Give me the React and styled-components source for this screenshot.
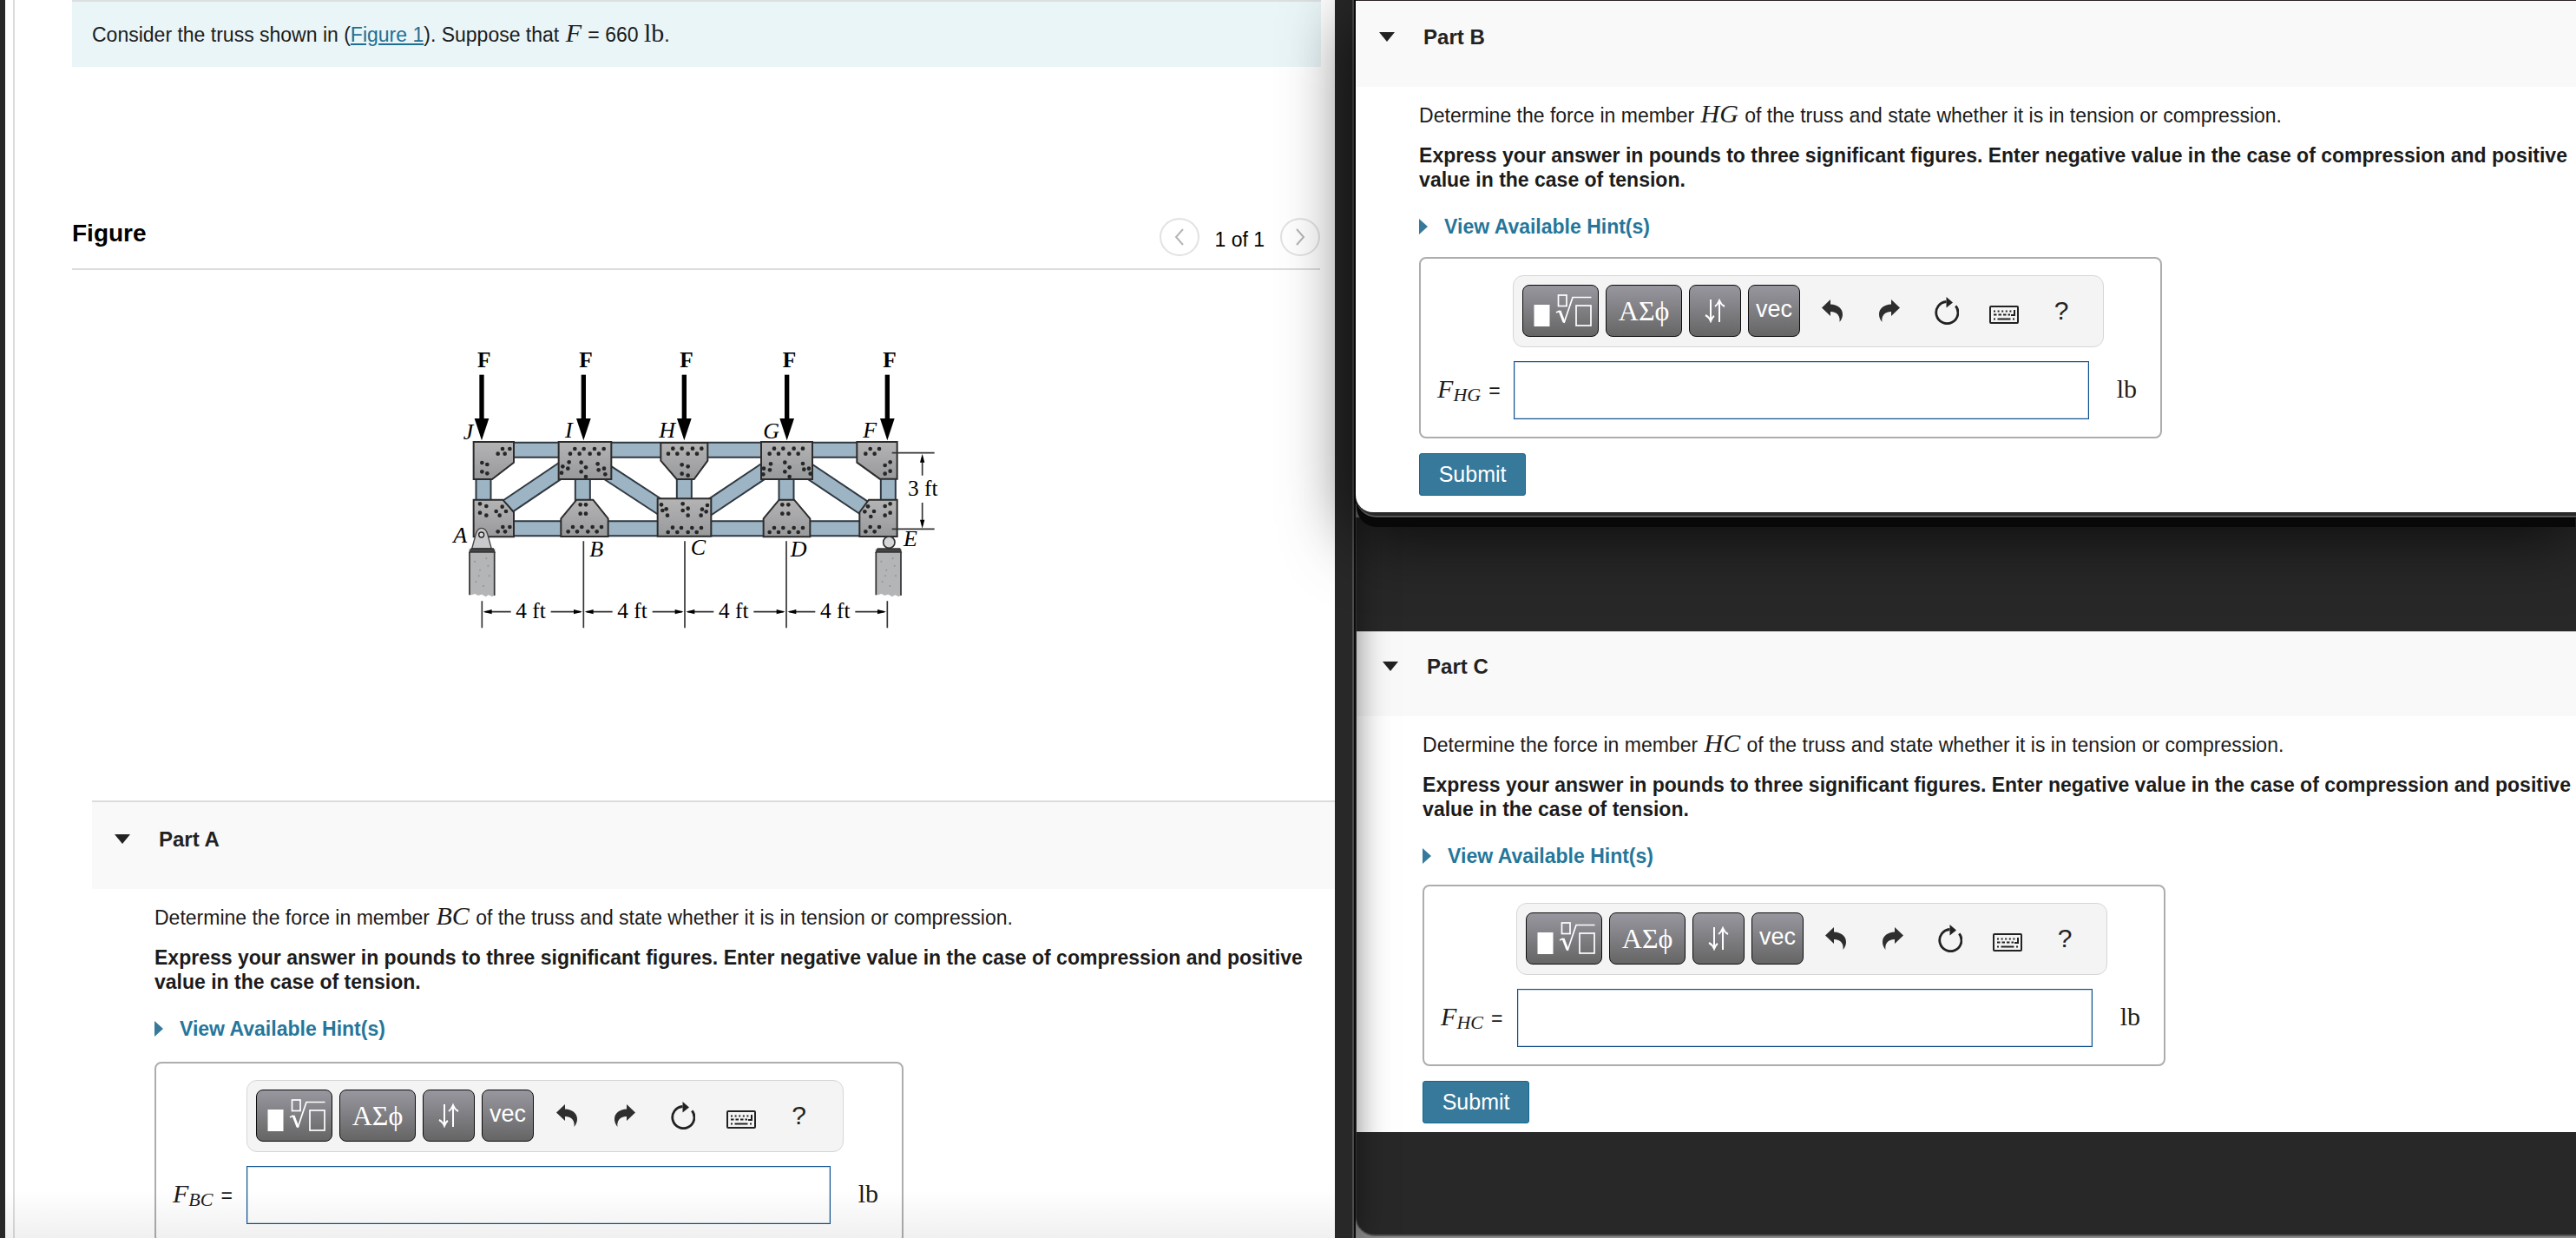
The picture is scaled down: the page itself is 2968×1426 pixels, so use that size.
import React, { useState } from "react";
import styled, { createGlobalStyle } from "styled-components";

const GlobalStyle = createGlobalStyle`
  * {
    box-sizing: border-box;
  }

  body {
    margin: 0;
    background: #8c8c8c;
    color: #1b1b1b;
    font-family: "Liberation Sans", Arial, sans-serif;
    font-size: 23px;
    line-height: 28px;
  }

  h2, p {
    margin: 0;
  }
`;

const Desktop = styled.div`
  display: grid;
  grid-template-columns: minmax(0, 10fr) minmax(0, 9fr);
  height: 100vh;
  overflow: hidden;
`;

const LeftWindow = styled.main`
  position: relative;
  z-index: 2;
  min-width: 0;
  overflow: hidden;
  padding-left: 6px;
  padding-right: 20px;
  border-right: 2px solid #4c4c4c;
  background: #282828;
`;

const LeftShell = styled.div`
  position: relative;
  z-index: 2;
  display: grid;
  min-height: 0;
  padding-right: 2px;
  background: #0c0c0c;
  box-shadow: 0 0 36px rgba(0, 0, 0, 0.5);
`;

const LeftPage = styled.div`
  position: relative;
  height: 100%;
  overflow: hidden;
  padding-left: 9px;
  background: #fff;

  &::after {
    content: "";
    position: absolute;
    left: 0;
    right: 0;
    bottom: 0;
    height: 56px;
    background: linear-gradient(rgba(0, 0, 0, 0), rgba(0, 0, 0, 0.06));
    pointer-events: none;
  }
`;

const LeftContent = styled.div`
  min-height: 100%;
  padding-left: 66px;
  border-left: 2px solid #dcdcdc;
`;

const Prompt = styled.p`
  margin-right: 16px;
  padding: 24px 24px 23px 23px;
  border-top: 2px solid #dcdfdf;
  background: #e9f5f7;
`;

const FigureLink = styled.a`
  color: #1f6f94;
  text-decoration: underline;
`;

const MathText = styled.span`
  margin: 0 ${(props) => props.$gap || 0}px;
  font-family: "Liberation Serif", "Times New Roman", serif;
  font-size: 30px;
  font-style: ${(props) => (props.$roman ? "normal" : "italic")};
  line-height: 1px;
`;

const FigureHead = styled.div`
  display: flex;
  justify-content: space-between;
  margin: 174px 17px 0 0;
  padding-bottom: 14px;
  border-bottom: 2px solid #dcdcdc;
`;

const FigureTitle = styled.h2`
  font-size: 28px;
  line-height: 36px;
  color: #000;
`;

const Pager = styled.div`
  display: flex;
  align-items: center;
  gap: 18px;
  color: #000;
`;

const PageCount = styled.span`
  padding-top: 6px;
`;

const PageButton = styled.button`
  display: grid;
  place-items: center;
  width: 46px;
  height: 44px;
  padding: 0;
  border: 2px solid #e2e2e2;
  border-radius: 50%;
  background: transparent;
`;

const FigureArea = styled.figure`
  display: flex;
  justify-content: center;
  margin: 69px 18px 0 0;
`;

const RightColumn = styled.div`
  display: flex;
  flex-direction: column;
  min-width: 0;
  padding-bottom: 2px;
`;

const FrontWindow = styled.section`
  position: relative;
  z-index: 3;
  padding-bottom: 4px;
  border-top: 1px solid #2a2226;
  border-bottom: 2px solid #555;
  border-bottom-left-radius: 24px;
  background: #282828;
  box-shadow: 0 0 0 1px #000, 0 12px 0 -1px #080808, 0 20px 80px rgba(0, 0, 0, 0.75);
`;

const FrontPage = styled.div`
  overflow: hidden;
  padding: 0 0 19px 1px;
  border-bottom-left-radius: 20px;
  background: #fff;
`;

const BackWindow = styled.section`
  flex: 1;
  padding: 131px 0 0;
  border-bottom: 2px solid #555;
  border-left: 1px solid #444;
  border-bottom-left-radius: 22px;
  background: #282828;
`;

const BackPage = styled.div`
  padding: 0 0 10px 4px;
  border-top: 1px solid #c4c4c4;
  background: linear-gradient(90deg, #f9f9f9 4px, transparent 4px) 0 0 / 100% 97px no-repeat, #fff;
`;

const SectionA = styled.div`
  margin: 192px 0 0 23px;
  border-top: 2px solid #dcdcdc;
`;

const PartHeader = styled.header`
  display: flex;
  align-items: flex-start;
  gap: 33px;
  padding: ${(props) => props.$top}px 24px 43px 26px;
  background: #f9f9f9;
`;

const Toggle = styled.button`
  display: flex;
  padding: 8px 0 0;
  border: 0;
  background: none;
`;

const PartTitle = styled.h2`
  font-size: 24px;
  line-height: 28px;
  color: #222;
`;

const PartBody = styled.div`
  padding: 19px 0 0 72px;
`;

const Instruction = styled.p`
  margin-top: 18px;
  font-weight: 700;
`;

const HintButton = styled.button`
  display: flex;
  align-items: center;
  gap: 19px;
  margin: 26px 0 ${(props) => props.$below}px;
  padding: 0;
  border: 0;
  background: none;
  color: #25769a;
  font: inherit;
  font-weight: 700;
`;

const AnswerBox = styled.form`
  max-width: ${(props) => (props.$wide ? 863 : 856)}px;
  padding: 19px 27px 20px 19px;
  border: 2px solid #adadad;
  border-radius: 8px;
`;

const Toolbar = styled.div`
  display: flex;
  align-items: center;
  gap: 8px;
  width: ${(props) => (props.$wide ? 688 : 681)}px;
  height: 83px;
  margin-left: ${(props) => (props.$wide ? 85 : 87)}px;
  padding: 0 0 1px 10px;
  border: 1px solid #d6d6d6;
  border-radius: 12px;
  background: #f4f4f4;
`;

const ToolButton = styled.button`
  display: grid;
  place-items: center;
  width: ${(props) => props.$width}px;
  height: 60px;
  padding: 0 0 ${(props) => props.$lift || 0}px;
  border: 1px solid #0c0c0c;
  border-radius: 8px;
  background: linear-gradient(#98979f, #656565);
  color: #fff;
  font-family: ${(props) => (props.$serif ? '"Liberation Serif", serif' : '"Liberation Sans", sans-serif')};
  font-size: ${(props) => (props.$serif ? 32 : 27)}px;
  line-height: 32px;
`;

const IconGroup = styled.div`
  display: flex;
  align-items: center;
  margin-left: -4px;
`;

const IconButton = styled.button`
  display: grid;
  place-items: center;
  width: ${(props) => (props.$wide ? 67 : 66)}px;
  height: 60px;
  padding: 0;
  border: 0;
  background: none;
  color: #222;
  font-family: "Liberation Sans", sans-serif;
  font-size: 30px;
`;

const AnswerRow = styled.div`
  display: flex;
  align-items: center;
  margin-top: 16px;
`;

const AnswerLabel = styled.label`
  flex: none;
  width: ${(props) => (props.$wide ? 85 : 88)}px;
  white-space: nowrap;
`;

const Subscript = styled.span`
  position: relative;
  top: 4px;
  font-size: 22px;
`;

const Equals = styled.span`
  margin-left: 9px;
`;

const AnswerInput = styled.input`
  flex: 1;
  min-width: 0;
  height: 67px;
  padding: 0 12px;
  border: 1px solid #0d4f8f;
  border-radius: 0;
  background: transparent;
  box-shadow: inset 0 0 0 1px #c9d9e6;
  font: inherit;
`;

const Unit = styled.span`
  margin-left: 32px;
`;

const SubmitButton = styled.button`
  width: 123px;
  height: 49px;
  margin-top: 17px;
  padding: 0;
  border: 1px solid #0f6a90;
  border-radius: 3px;
  background: #36799b;
  color: #fff;
  font-family: inherit;
  font-size: 25px;
`;

const RootIcon = () => (
  <svg width="86" height="58" viewBox="1 1 86 58" fill="none" stroke="#fff" strokeWidth="1.7">
    <rect x="13.5" y="23" width="18" height="25" fill="#fff" stroke="none" />
    <rect x="41.5" y="12" width="9.5" height="12.5" />
    <path d="M39 32l4-2" />
    <path d="M43 30l5 13" strokeWidth="3" />
    <path d="M48 44L58 14.5H79.5" />
    <rect x="62" y="24" width="17" height="23" />
  </svg>
);

const ArrowsIcon = () => (
  <svg width="26" height="28" viewBox="0 0 26 28" fill="none" stroke="#fff" strokeWidth="2">
    <path d="M8 1V26M2 19Q6 21 8 26Q10 21 12 20M18 27V2M24 9Q20 7 18 2Q16 7 13 9" />
  </svg>
);

const UndoIcon = () => (
  <svg width="24" height="26" viewBox="0 0 24 26" fill="#2e2e2e">
    <path d="M0 9.5L10 0V5.500C18 6 24 10 24 17C24 20 23 23 20.500 26C21.500 19 18 14 10 14V19Z" />
  </svg>
);

const RedoIcon = () => (
  <svg width="24" height="26" viewBox="0 0 24 26" fill="#2e2e2e">
    <path d="M24 9.5L14 0V5.500C6 6 0 10 0 17C0 20 1 23 3.500 26C2.500 19 6 14 14 14V19Z" />
  </svg>
);

const ResetIcon = () => (
  <svg width="28" height="32" viewBox="0 0 28 32">
    <path d="M24.300 10.300A12.600 12.600 0 1 1 13.500 5.500" fill="none" stroke="#222" strokeWidth="2.800" />
    <path d="M13.500 0L21 6.500L13.500 12.500Z" fill="#222" />
  </svg>
);

const KeyboardIcon = () => (
  <svg width="34" height="30" viewBox="0 0 34 30" fill="none" stroke="#222" strokeWidth="2">
    <rect x="1" y="10" width="32" height="19" rx="1" />
    <path d="M5 15.500H26" strokeDasharray="2 2.600" />
    <path d="M5 19.500H24" strokeDasharray="3.500 2" />
    <path d="M29 14V20H25M5 24.500H7M9.500 24.500H24.500M27 24.500H29" />
  </svg>
);

const CHORDS = [
  [120, 415, 1560, 415],
  [120, 686, 1540, 686],
  [138, 480, 138, 620],
  [481, 480, 481, 620],
  [832, 480, 832, 620],
  [1185, 480, 1185, 620],
  [1537, 480, 1537, 620],
  [190, 631, 430, 469],
  [550, 482, 770, 626],
  [900, 626, 1130, 472],
  [1240, 472, 1470, 626],
];

const PLATES = [
  "104,387 243,387 243,458 168,516 104,516",
  "398,387 580,387 580,516 398,516",
  "751,390 913,390 913,452 866,516 806,516 751,452",
  "1098,387 1275,387 1275,516 1098,516",
  "1429,387 1568,387 1568,515 1508,515 1429,458",
  "104,587 205,587 243,630 243,715 104,715",
  "460,587 517,587 569,652 569,714 406,714 406,652",
  "740,583 925,583 925,713 740,713",
  "1160,587 1212,587 1267,652 1267,715 1106,715 1106,652",
  "1470,587 1568,587 1568,714 1438,714 1438,630",
];

const BOLTS = [
  // J, A
  [204, 411], [229, 411], [188, 428], [212, 428], [133, 459], [151, 465], [133, 490], [151, 496],
  [126, 601], [148, 609], [126, 632], [148, 641], [182, 627], [194, 641], [203, 611], [216, 627],
  [205, 681], [229, 681], [188, 697], [213, 697],
  // I, B
  [454, 411], [485, 411], [522, 411], [554, 411], [438, 428], [470, 428], [506, 428], [537, 428],
  [434, 457], [412, 472], [430, 479], [408, 494], [476, 458], [492, 475], [476, 490], [492, 507],
  [533, 463], [536, 484], [555, 479], [559, 499],
  [473, 604], [492, 604], [473, 635], [492, 635], [447, 681], [478, 681], [515, 681], [546, 681],
  [431, 697], [462, 697], [499, 697], [530, 697],
  // H, C
  [793, 410], [824, 410], [861, 410], [892, 410], [777, 428], [808, 428], [845, 428], [876, 428],
  [824, 466], [845, 472], [824, 497], [845, 503],
  [753, 604], [757, 624], [770, 619], [774, 641], [827, 601], [845, 617], [827, 624], [845, 641],
  [912, 606], [894, 620], [908, 628], [890, 641], [792, 683], [822, 684], [859, 684], [891, 684],
  [776, 699], [808, 699], [845, 699], [875, 699],
  // G, D
  [1143, 410], [1174, 410], [1211, 410], [1242, 410], [1127, 428], [1158, 428], [1195, 428], [1226, 428],
  [1131, 463], [1107, 479], [1128, 484], [1105, 499], [1180, 458], [1196, 475], [1180, 490], [1196, 507],
  [1242, 462], [1246, 482], [1263, 479], [1268, 497],
  [1171, 604], [1192, 604], [1171, 635], [1192, 635], [1143, 684], [1174, 684], [1211, 684], [1242, 684],
  [1127, 699], [1158, 699], [1195, 699], [1226, 699],
  // F, E
  [1475, 411], [1506, 411], [1459, 428], [1490, 428], [1544, 457], [1526, 468], [1544, 488], [1526, 497],
  [1544, 601], [1526, 609], [1544, 632], [1526, 641], [1467, 610], [1456, 628], [1488, 627], [1477, 645],
  [1475, 681], [1506, 681], [1459, 697], [1490, 697],
];

const JOINTS = [
  ["J", 68, 378], ["I", 420, 373], ["H", 745, 373], ["G", 1105, 376], ["F", 1450, 373],
  ["A", 34, 735], ["B", 505, 783], ["C", 854, 776], ["D", 1199, 782], ["E", 1590, 747],
];

const LOADS = [132, 484, 832, 1187, 1534];
const STATIONS = [133, 484, 834, 1185, 1534];

const Pier = ({ x }) => (
  <g>
    <path
      d={`M${x} 756H${x + 90}V916l-10 6-12-6-10 6-14-8-12 4-12-6-10 4H${x}Z`}
      fill="#b4b5b7"
    />
    <path d={`M${x + 2} 916V768M${x + 88} 918V768`} stroke="#333" strokeWidth="5" />
    <path d={`M${x + 2} 768L${x + 8} 756H${x + 84}L${x + 89} 768Z`} fill="#444" stroke="#333" strokeWidth="4" />
    {[[20, 800], [60, 790], [38, 830], [70, 850], [24, 870], [50, 885], [66, 815], [34, 850]].map(([dx, y]) => (
      <circle key={`${dx}-${y}`} cx={x + dx} cy={y} r="3" fill="#929395" />
    ))}
  </g>
);

const Truss = () => (
  <svg width="582" height="350" viewBox="0 0 1746 1050" role="img" aria-label="Truss with five loads F">
    <defs>
      <linearGradient id="steel" x1="0" y1="0" x2="0" y2="1">
        <stop offset="0" stopColor="#b4b4b5" />
        <stop offset="1" stopColor="#98999b" />
      </linearGradient>
    </defs>
    {CHORDS.map(([x1, y1, x2, y2]) => (
      <g key={`${x1}-${y1}-${x2}`}>
        <line x1={x1} y1={y1} x2={x2} y2={y2} stroke="#2f3840" strokeWidth="57" />
        <line x1={x1} y1={y1} x2={x2} y2={y2} stroke="#9db4c5" strokeWidth="45" />
      </g>
    ))}
    {PLATES.map((points) => (
      <polygon key={points} points={points} fill="url(#steel)" stroke="#2c2c2c" strokeWidth="6" />
    ))}
    {BOLTS.map(([x, y]) => (
      <circle key={`${x}-${y}`} cx={x} cy={y} r="7" fill="#262626" />
    ))}
    {LOADS.map((x) => (
      <g key={x}>
        <rect x={x - 8} y="155" width="16" height="155" />
        <path d={`M${x - 25} 306H${x + 25}L${x} 382Z`} />
        <text x={x - 15} y="130" fontFamily="Liberation Serif" fontWeight="700" fontSize="76">F</text>
      </g>
    ))}
    <path d="M98 756L112 705Q118 685 131 685Q146 685 152 705L166 756Z" fill="#c9cacc" stroke="#444" strokeWidth="4" />
    <circle cx="131" cy="708" r="9" fill="#ddd" stroke="#222" strokeWidth="4" />
    <circle cx="1540" cy="734" r="20" fill="#d5d6d8" stroke="#333" strokeWidth="5" />
    <Pier x={88} />
    <Pier x={1493} />
    <g stroke="#333" strokeWidth="5">
      <path d="M133 937V1030M484 730V1030M834 730V1030M1185 730V1030M1534 937V1030" />
      <path d="M1550 425H1697M1550 688H1697M1655 440V503M1655 597V675" />
    </g>
    <path d="M1655 428l-8 30h16ZM1655 686l-8-30h16Z" />
    {STATIONS.slice(0, 4).map((x, index) => {
      const end = STATIONS[index + 1];
      return (
        <g key={x}>
          <path d={`M${x + 10} 974H${x + 100}M${x + 238} 974H${end - 10}`} stroke="#333" strokeWidth="5" />
          <path d={`M${x + 4} 974l30-8v16ZM${end - 4} 974l-30-8v16Z`} />
          <text x={x + 117} y="997" fontFamily="Liberation Serif" fontSize="76">4 ft</text>
        </g>
      );
    })}
    <text x="1605" y="574" fontFamily="Liberation Serif" fontSize="76">3 ft</text>
    {JOINTS.map(([name, x, y]) => (
      <text key={name} x={x} y={y} fontFamily="Liberation Serif" fontStyle="italic" fontSize="78">{name}</text>
    ))}
  </svg>
);

const Part = ({ letter, member, top, below, wide, children }) => {
  const [answer, setAnswer] = useState("");
  const inputId = `answer-${letter}`;

  return (
    <>
      <PartHeader $top={top}>
        <Toggle aria-label={`Collapse Part ${letter}`}>
          <svg width="18" height="11" viewBox="0 0 18 11">
            <path d="M0 0H18L9 11Z" fill="#222" />
          </svg>
        </Toggle>
        <PartTitle>Part {letter}</PartTitle>
      </PartHeader>
      <PartBody>
        <p>
          Determine the force in member <MathText $gap={1}>{member}</MathText> of the truss and state whether it is in
          tension or compression.
        </p>
        <Instruction>
          Express your answer in pounds to three significant figures. Enter negative value in the case of compression
          and positive value in the case of tension.
        </Instruction>
        <HintButton $below={below}>
          <svg width="10" height="18" viewBox="0 0 10 18">
            <path d="M0 0L10 9L0 18Z" fill="#36799b" />
          </svg>
          View Available Hint(s)
        </HintButton>
        <AnswerBox $wide={wide} onSubmit={(event) => event.preventDefault()}>
          <Toolbar $wide={wide}>
            <ToolButton type="button" $width={88} aria-label="Templates"><RootIcon /></ToolButton>
            <ToolButton type="button" $width={88} $serif>ΑΣϕ</ToolButton>
            <ToolButton type="button" $width={60} aria-label="Arrows"><ArrowsIcon /></ToolButton>
            <ToolButton type="button" $width={60} $lift={4}>vec</ToolButton>
            <IconGroup>
              <IconButton type="button" $wide={wide} aria-label="Undo"><UndoIcon /></IconButton>
              <IconButton type="button" $wide={wide} aria-label="Redo"><RedoIcon /></IconButton>
              <IconButton type="button" $wide={wide} aria-label="Reset"><ResetIcon /></IconButton>
              <IconButton type="button" $wide={wide} aria-label="Keyboard"><KeyboardIcon /></IconButton>
              <IconButton type="button" $wide={wide}>?</IconButton>
            </IconGroup>
          </Toolbar>
          <AnswerRow>
            <AnswerLabel htmlFor={inputId} $wide={wide}>
              <MathText>
                F<Subscript>{member}</Subscript>
              </MathText>
              <Equals>=</Equals>
            </AnswerLabel>
            <AnswerInput id={inputId} value={answer} onChange={(event) => setAnswer(event.target.value)} />
            <Unit>
              <MathText $roman>lb</MathText>
            </Unit>
          </AnswerRow>
        </AnswerBox>
        {children}
      </PartBody>
    </>
  );
};

const App = () => (
  <>
    <GlobalStyle />
    <Desktop>
      <LeftShell>
        <LeftWindow>
          <LeftPage>
            <LeftContent>
              <Prompt>
                Consider the truss shown in (<FigureLink href="#figure">Figure 1</FigureLink>). Suppose that{" "}
                <MathText $gap={1}>F</MathText> = 660 <MathText $roman>lb</MathText>.
              </Prompt>
              <FigureHead id="figure">
                <FigureTitle>Figure</FigureTitle>
                <Pager>
                  <PageButton aria-label="Previous figure">
                    <svg width="12" height="20" viewBox="0 0 12 20" fill="none" stroke="#b5b5b5" strokeWidth="2">
                      <path d="M10 1L2 10L10 19" />
                    </svg>
                  </PageButton>
                  <PageCount>1 of 1</PageCount>
                  <PageButton aria-label="Next figure">
                    <svg width="12" height="20" viewBox="0 0 12 20" fill="none" stroke="#b5b5b5" strokeWidth="2">
                      <path d="M2 1L10 10L2 19" />
                    </svg>
                  </PageButton>
                </Pager>
              </FigureHead>
              <FigureArea>
                <Truss />
              </FigureArea>
              <SectionA>
                <Part letter="A" member="BC" top={29} below={24} wide />
              </SectionA>
            </LeftContent>
          </LeftPage>
        </LeftWindow>
      </LeftShell>
      <RightColumn>
        <FrontWindow>
          <FrontPage>
            <Part letter="B" member="HG" top={28} below={21}>
              <SubmitButton>Submit</SubmitButton>
            </Part>
          </FrontPage>
        </FrontWindow>
        <BackWindow>
          <BackPage>
            <Part letter="C" member="HC" top={26} below={19}>
              <SubmitButton>Submit</SubmitButton>
            </Part>
          </BackPage>
        </BackWindow>
      </RightColumn>
    </Desktop>
  </>
);

export default App;
